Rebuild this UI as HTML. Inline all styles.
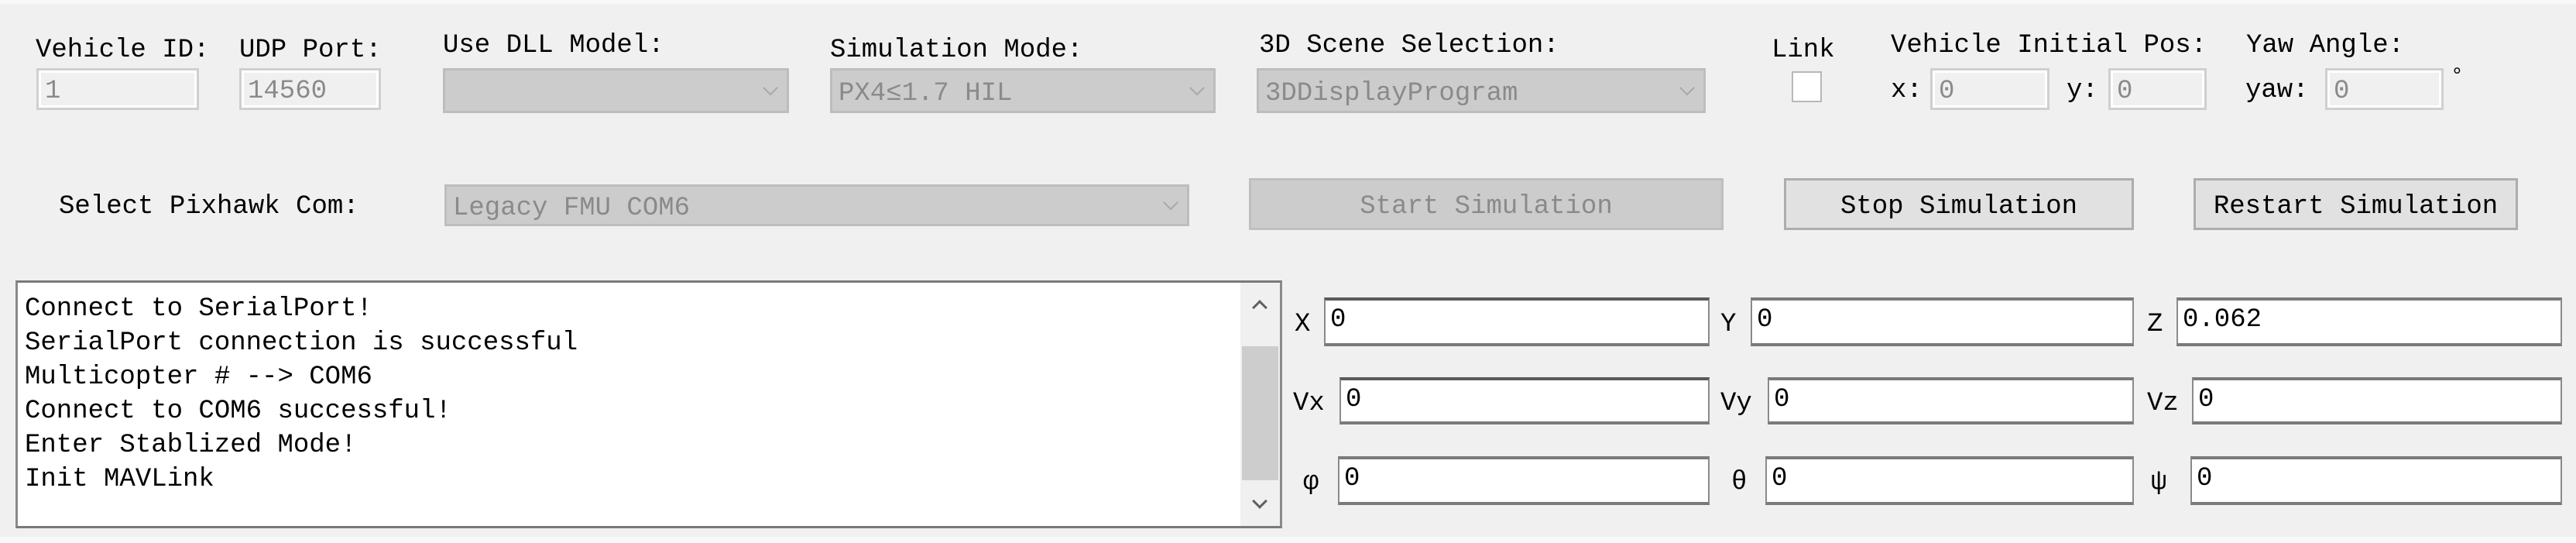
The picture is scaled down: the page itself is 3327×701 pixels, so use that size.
<!DOCTYPE html>
<html><head><meta charset="utf-8"><style>
*{margin:0;padding:0;box-sizing:border-box}
body{width:3327px;height:701px;background:#f0f0f0;position:relative;overflow:hidden;font-family:"Liberation Mono","DejaVu Sans Mono",monospace;font-size:34px;color:#000}
.a{position:absolute;white-space:pre;line-height:1}
.in{position:absolute;background:#f0f0f0;border:3px solid #cfcfcf;box-shadow:inset 0 0 0 3px #fff;color:#8a8a8a;padding:10px 0 0 8px;line-height:1}
.cb{position:absolute;background:#cccccc;border:3px solid #bdbdbd;color:#8a8a8a;padding:0 0 0 8px;line-height:1}
.cb i{position:absolute;right:14px;top:50%;width:14px;height:14px;border-right:2px solid #a8a8a8;border-bottom:2px solid #a8a8a8;transform:translateY(-75%) rotate(45deg);}
.btn{position:absolute;border:3px solid #adadad;background:#e1e1e1;text-align:center;line-height:68px}
.tb{position:absolute;background:#fff;border:2px solid #8a8a8a;border-top:4px solid #5a5a5a;border-bottom:4px solid #7a7a7a;padding:8px 0 0 6px;line-height:1}
.tb2{border-top-color:#7a7a7a}
.ar{position:absolute;width:14px;height:14px;border-left:3px solid #606060;border-top:3px solid #606060}
</style></head><body>
<div style="position:absolute;left:0;top:0;width:3327px;height:5px;background:#f8f8f8"></div>
<div style="position:absolute;left:0;top:693px;width:3327px;height:8px;background:#f8f8f8"></div>

<div class="a" style="left:46px;top:48px">Vehicle ID:</div>
<div class="in" style="left:47px;top:88px;width:210px;height:54px">1</div>
<div class="a" style="left:309px;top:48px">UDP Port:</div>
<div class="in" style="left:309px;top:88px;width:183px;height:54px">14560</div>

<div class="a" style="left:572px;top:42px">Use DLL Model:</div>
<div class="cb" style="left:572px;top:88px;width:447px;height:58px"><i></i></div>

<div class="a" style="left:1072px;top:48px">Simulation Mode:</div>
<div class="cb" style="left:1072px;top:88px;width:498px;height:58px;padding-top:13px">PX4≤1.7 HIL<i></i></div>

<div class="a" style="left:1626px;top:42px">3D Scene Selection:</div>
<div class="cb" style="left:1623px;top:88px;width:580px;height:58px;padding-top:13px">3DDisplayProgram<i></i></div>

<div class="a" style="left:2288px;top:48px">Link</div>
<div style="position:absolute;left:2314px;top:92px;width:39px;height:40px;background:#fff;border:2px solid #b8b8b8"></div>

<div class="a" style="left:2442px;top:42px">Vehicle Initial Pos:</div>
<div class="a" style="left:2442px;top:100px">x:</div>
<div class="in" style="left:2493px;top:88px;width:154px;height:54px">0</div>
<div class="a" style="left:2669px;top:100px">y:</div>
<div class="in" style="left:2723px;top:88px;width:127px;height:54px">0</div>
<div class="a" style="left:2901px;top:42px">Yaw Angle:</div>
<div class="a" style="left:2900px;top:100px">yaw:</div>
<div class="in" style="left:3003px;top:88px;width:153px;height:54px">0</div>
<div class="a" style="left:3165px;top:86px;font-size:28px">°</div>

<div class="a" style="left:76px;top:250px">Select Pixhawk Com:</div>
<div class="cb" style="left:574px;top:238px;width:962px;height:54px;padding-top:11px">Legacy FMU COM6<i></i></div>
<div class="btn" style="left:1613px;top:230px;width:613px;height:67px;background:#cccccc;border-color:#bfbfbf;color:#8a8a8a">Start Simulation</div>
<div class="btn" style="left:2304px;top:230px;width:452px;height:67px">Stop Simulation</div>
<div class="btn" style="left:2833px;top:230px;width:419px;height:67px">Restart Simulation</div>

<div style="position:absolute;left:20px;top:362px;width:1636px;height:320px;background:#fff;border:3px solid #8a8a8a;border-top-color:#7a7a7a;border-bottom-color:#7a7a7a"></div>
<div class="a" style="left:32px;top:377px;line-height:44px">Connect to SerialPort!
SerialPort connection is successful
Multicopter # --&gt; COM6
Connect to COM6 successful!
Enter Stablized Mode!
Init MAVLink</div>
<div style="position:absolute;left:1602px;top:365px;width:51px;height:314px;background:#f0f0f0"></div>
<div style="position:absolute;left:1604px;top:447px;width:47px;height:173px;background:#cdcdcd"></div>
<div class="ar" style="left:1620px;top:390px;transform:rotate(45deg)"></div>
<div class="ar" style="left:1620px;top:640px;transform:rotate(225deg)"></div>

<div class="a" style="left:1672px;top:402px">X</div>
<div class="tb" style="left:1710px;top:384px;width:498px;height:63px">0</div>
<div class="a" style="left:2222px;top:402px">Y</div>
<div class="tb tb2" style="left:2261px;top:384px;width:495px;height:63px">0</div>
<div class="a" style="left:2773px;top:402px">Z</div>
<div class="tb tb2" style="left:2811px;top:384px;width:498px;height:63px">0.062</div>

<div class="a" style="left:1670px;top:504px">Vx</div>
<div class="tb" style="left:1730px;top:487px;width:478px;height:61px">0</div>
<div class="a" style="left:2222px;top:504px">Vy</div>
<div class="tb tb2" style="left:2283px;top:487px;width:473px;height:61px">0</div>
<div class="a" style="left:2773px;top:504px">Vz</div>
<div class="tb tb2" style="left:2831px;top:487px;width:478px;height:61px">0</div>

<div class="a" style="left:1683px;top:606px">φ</div>
<div class="tb tb2" style="left:1728px;top:589px;width:480px;height:63px">0</div>
<div class="a" style="left:2236px;top:606px">θ</div>
<div class="tb tb2" style="left:2280px;top:589px;width:476px;height:63px">0</div>
<div class="a" style="left:2778px;top:606px">ψ</div>
<div class="tb tb2" style="left:2829px;top:589px;width:480px;height:63px">0</div>
</body></html>
